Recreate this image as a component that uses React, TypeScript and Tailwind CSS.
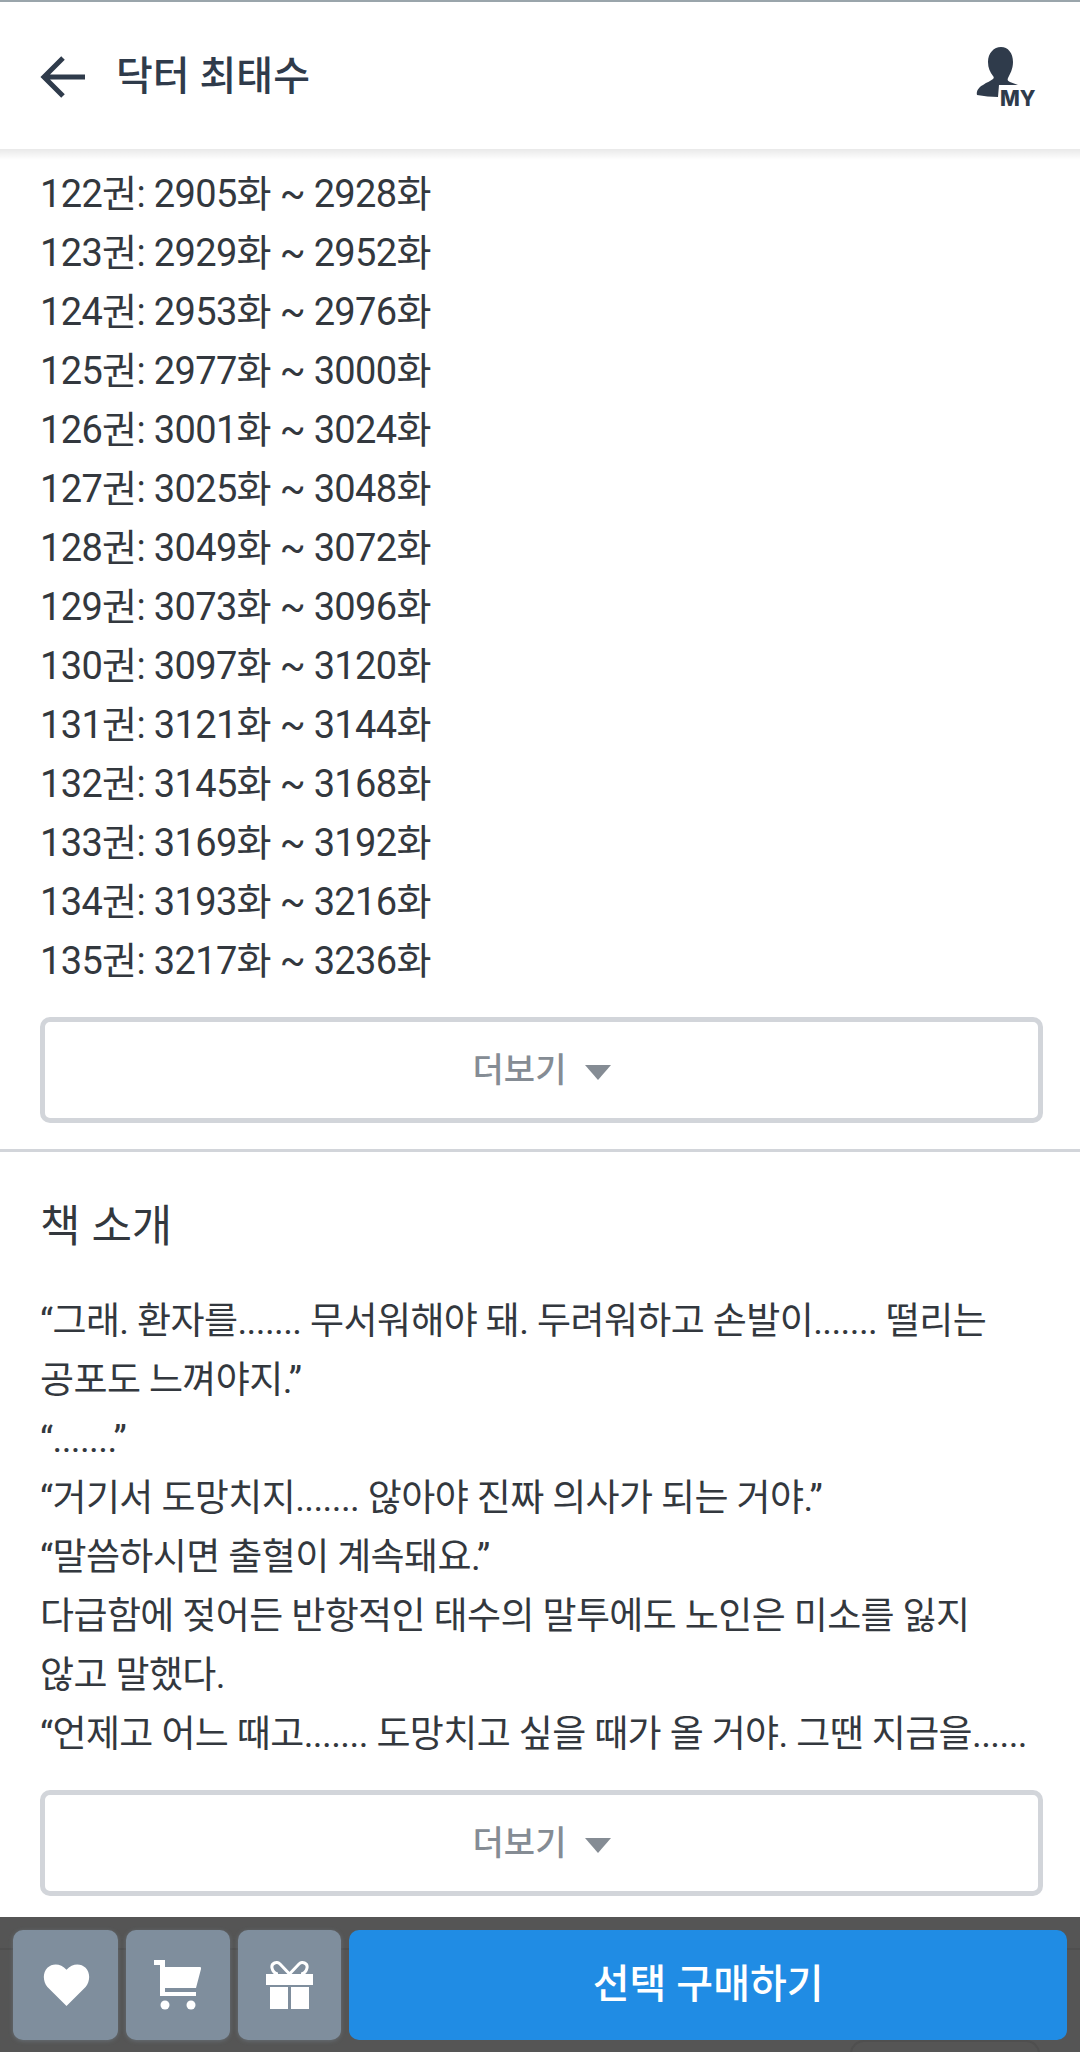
import React from "react";

const volumes = [
  "122권: 2905화 ~ 2928화",
  "123권: 2929화 ~ 2952화",
  "124권: 2953화 ~ 2976화",
  "125권: 2977화 ~ 3000화",
  "126권: 3001화 ~ 3024화",
  "127권: 3025화 ~ 3048화",
  "128권: 3049화 ~ 3072화",
  "129권: 3073화 ~ 3096화",
  "130권: 3097화 ~ 3120화",
  "131권: 3121화 ~ 3144화",
  "132권: 3145화 ~ 3168화",
  "133권: 3169화 ~ 3192화",
  "134권: 3193화 ~ 3216화",
  "135권: 3217화 ~ 3236화",
];

const intro = [
  "“그래. 환자를....... 무서워해야 돼. 두려워하고 손발이....... 떨리는",
  "공포도 느껴야지.”",
  "“.......”",
  "“거기서 도망치지....... 않아야 진짜 의사가 되는 거야.”",
  "“말씀하시면 출혈이 계속돼요.”",
  "다급함에 젖어든 반항적인 태수의 말투에도 노인은 미소를 잃지",
  "않고 말했다.",
  "“언제고 어느 때고....... 도망치고 싶을 때가 올 거야. 그땐 지금을......",
];

const MoreButton = () => (
  <button className="flex h-[106px] w-[1003px] items-center justify-center gap-[18px] rounded-[10px] border-[5px] border-[#d2d5da] bg-white">
    <span className="ml-[2px] text-[34px] font-medium text-[#858c94]">더보기</span>
    <svg width="28" height="18" viewBox="0 0 28 18" className="mt-[3px]">
      <path d="M1 2h26L14 17z" fill="#858c94" />
    </svg>
  </button>
);

const ActionButton = ({ width, children }: { width: string; children: React.ReactNode }) => (
  <button
    className={`relative flex h-full items-center justify-center rounded-[10px] bg-[#7f8e9d] shadow-[0_1px_4px_rgba(127,142,157,0.45)] ${width}`}
  >
    {children}
  </button>
);

export default function App() {
  return (
    <div className="flex h-[2052px] w-[1080px] flex-col overflow-hidden bg-white font-['Roboto','Noto_Sans_CJK_KR',sans-serif] text-[#33383e]">
      {/* Header */}
      <header className="flex h-[149px] shrink-0 items-center justify-between border-t-2 border-[#9aa5ab] bg-white pl-[40px] pr-[42px] pt-[2px]">
        <div className="flex items-center gap-[30px]">
          <svg width="46" height="44" viewBox="0 0 46 44" fill="none" stroke="#2f3b4b" strokeWidth="5">
            <path d="M45 22H4M23 3 4 22l19 19" />
          </svg>
          <h1 className="text-[40px] font-medium text-[#2f3b4b]">닥터 최태수</h1>
        </div>
        <svg width="62" height="66" viewBox="0 0 62 66" className="mt-[6px]">
          <path
            d="M25 0c7 0 12 6 12 15 0 7-3 12-5 16-1 2 0 3 2 4l8 3H23l-1 12c-7 0-14-1-21-2-1-4 2-8 6-10 4-3 8-4 10-6 1-1 1-2 0-3-3-4-5-8-5-14C12 6 18 0 25 0z"
            fill="#2f3b4b"
          />
          <text x="24" y="59" fontFamily="Inter, sans-serif" fontSize="21" fontWeight="800" fill="#2f3b4b">
            MY
          </text>
        </svg>
      </header>
      <div className="h-[11px] shrink-0 bg-gradient-to-b from-[#e9e9e9] to-white" />

      {/* Volume list */}
      <section className="px-[40px] pt-[5px]">
        <ul className="text-[38px] leading-[59px] tracking-[-0.65px]">
          {volumes.map((v) => (
            <li key={v}>{v}</li>
          ))}
        </ul>
        <div className="mt-[26px]">
          <MoreButton />
        </div>
      </section>
      <div className="mt-[26px] h-[3px] shrink-0 bg-[#d2d5da]" />

      {/* Book intro */}
      <section className="px-[40px]">
        <h2 className="mt-[50px] text-[44px] font-normal leading-[50px]">책 소개</h2>
        <div className="mt-[40px] text-[37px] leading-[59px] tracking-[-0.6px] whitespace-nowrap">
          {intro.map((line) => (
            <p key={line}>{line}</p>
          ))}
        </div>
        <div className="mt-[26px]">
          <MoreButton />
        </div>
      </section>

      {/* Bottom actions */}
      <div className="relative mt-[21px] flex h-[135px] shrink-0 gap-[8px] bg-[#555555] px-[13px] pb-[12px] pt-[13px]">
        {/* page content showing faintly through the bar */}
        <div className="absolute inset-x-0 top-[31px] h-[2px] bg-[#4f4f4f]" />
        <div className="absolute bottom-[-20px] left-[850px] h-[32px] w-[190px] rounded-[14px] border-2 border-[#4f4f4f]" />
        <ActionButton width="w-[105px]">
          <svg width="47" height="42" viewBox="0 0 48 44" fill="white" className="ml-[2px]">
            <path d="M24 44 4 24C-1 18-1 9 4 4c5-5 14-5 20 2 6-7 15-7 20-2 5 5 5 14 0 20z" />
          </svg>
        </ActionButton>
        <ActionButton width="w-[104px]">
          <svg width="47" height="50" viewBox="0 0 47 50" fill="white">
            <path d="M0 0h11v7h35c1 0 1.500 1 1 2l-5 19H11v4h31v4H6V5H0z" />
            <circle cx="11" cy="45" r="4.500" />
            <circle cx="37" cy="45" r="4.500" />
          </svg>
        </ActionButton>
        <ActionButton width="w-[104px]">
          <svg width="47" height="48" viewBox="0 0 47 48">
            <path d="M0 13h47v11H0zM4 26h18v22H4zM25 26h18v22H25z" fill="white" />
            <path
              d="M23.500 13 14 3C11 0 5 2 6 7c.5 3 3 6 6 6M23.500 13 33 3c3-3 9-1 8 4-.5 3-3 6-6 6"
              fill="none"
              stroke="white"
              strokeWidth="3"
            />
          </svg>
        </ActionButton>
        <button className="relative flex h-full w-[719px] items-center justify-center rounded-[10px] bg-[#208ce4] text-[40px] font-medium text-white">
          선택 구매하기
        </button>
      </div>
    </div>
  );
}
